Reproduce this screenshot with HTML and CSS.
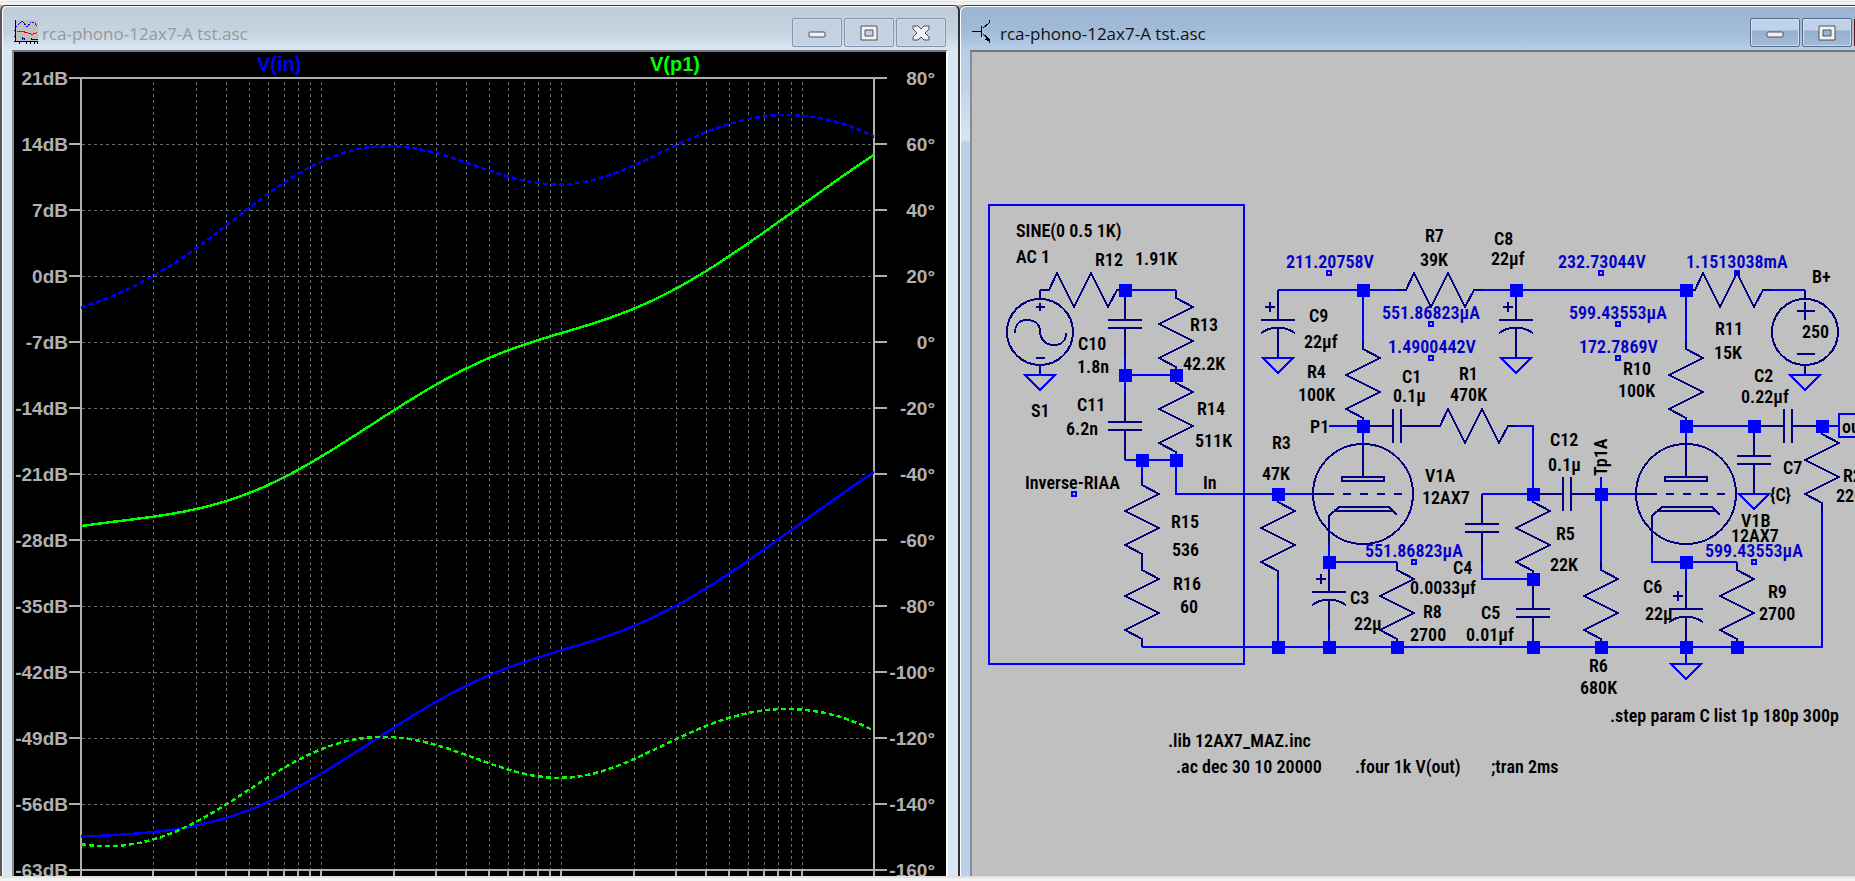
FILE: index.html
```
<!DOCTYPE html>
<html lang="en">
<head>
    <meta charset="UTF-8">
    <meta name="viewport" content="width=device-width, initial-scale=1.0">
    <title>rca-phono-12ax7-A tst.asc</title>
    <link rel="stylesheet" href="styles.css">
</head>
<body>
    <div class="toolbar-edge"></div>
    <main class="desktop">
        <section class="window window-plot">
            <header class="titlebar">
                <svg class="app-icon" viewBox="0 0 24 24" width="24" height="24" aria-hidden="true">
                    <rect x="2" width="22" height="22" fill="#c0c0c0"/>
                    <path d="M1.500 0V22M0 21.500H24M5.500 22v2M12.500 22v2M16.500 22v2M20.500 22v2M23.500 22v2M0 10.500h2M0 16.500h2" stroke="#000"/>
                    <path d="M2 7L8 1L13 7L17 2H20L23 6" fill="none" stroke="#00f" stroke-dasharray="2 1"/>
                    <path d="M3 11.500h5l5 1 5 2 5-2" fill="none" stroke="#f00"/>
                    <path d="M8.500 20v-2l2 1v-1M17.500 18v1.500h6" fill="none" stroke="#00a"/>
                </svg>
                <h1 class="title">rca-phono-12ax7-A tst.asc</h1>
                <div class="controls">
                    <button class="control" type="button" aria-label="Minimize"><svg width="20" height="20"><rect x="2" y="9" width="16" height="5" rx="1"/></svg></button>
                    <button class="control" type="button" aria-label="Maximize"><svg width="20" height="20"><path fill-rule="evenodd" d="M2 3h16v14H2zM6 7v6h8V7z"/></svg></button>
                    <button class="control" type="button" aria-label="Close"><svg width="20" height="20"><path d="M2 3h5l3 3 3-3h5v3l-4 4 4 4v3h-5l-3-3-3 3H2v-3l4-4-4-4z"/></svg></button>
                </div>
            </header>
            <svg class="view plot" role="img" aria-label="AC analysis plot">
                <g id="plot" transform="translate(-14 -52)">
                    <text class="trace-label label-in" x="257" y="71">V(in)</text>
                    <text class="trace-label label-p1" x="650" y="71">V(p1)</text>
                </g>
            </svg>
        </section>

        <section class="window window-schematic">
            <header class="titlebar">
                <svg class="app-icon" viewBox="0 0 24 24" width="24" height="24" aria-hidden="true">
                    <path d="M0 11.500h9M9.500 6v11M11 8l6-5V0M11 14l6 5v4" fill="none" stroke="#000"/>
                    <path d="M17 21l-4-1 3-4z"/>
                </svg>
                <h1 class="title">rca-phono-12ax7-A tst.asc</h1>
                <div class="controls">
                    <button class="control" type="button" aria-label="Minimize"><svg width="20" height="20"><rect x="2" y="9" width="16" height="5" rx="1"/></svg></button>
                    <button class="control" type="button" aria-label="Maximize"><svg width="20" height="20"><path fill-rule="evenodd" d="M2 3h16v14H2zM6 7v6h8V7z"/></svg></button>
                    <button class="control close" type="button" aria-label="Close"><svg width="20" height="20"><path d="M2 3h5l3 3 3-3h5v3l-4 4 4 4v3h-5l-3-3-3 3H2v-3l4-4-4-4z"/></svg></button>
                </div>
            </header>
            <svg class="view schematic" role="img" aria-label="Phono preamp schematic">
                <defs>
                    <!-- origin of each part is its top (or left) pin -->
                    <path id="res" d="M0 0V8L17 17L-17 34L17 51L-17 68L0 77V85"/>
                    <path id="resh" d="M0 0H9L17 -17L34 17L51 -17L68 17L77 0H85"/>
                    <path id="cap" d="M0 0V30M-17 30H17M-17 38H17M0 38V68"/>
                    <path id="caph" d="M0 0H30M30 -17V17M38 -17V17M38 0H68"/>
                    <path id="polcap" d="M0 0V30M-17 30H17M-17 43Q-9 38 -4 38H4Q9 38 17 43M0 38V68M-13 17H-3M-8 12V22"/>
                    <path id="gnd" d="M-15 0H15L0 15Z"/>
                    <g id="tube">
                        <circle r="50"/>
                        <path d="M0 -50V-17M-21 -17H21V-13H-21ZM-51 0H-29M-20 0h8M-3 0h8M14 0h8M31 0h8M-29 17L-24 13H26L30 17M-29 17H30L34 21M-24 13L-34 22V51"/>
                    </g>
                    <rect id="dot" x="-6" y="-6" width="13" height="13"/>
                    <rect id="anchor" x="-2" y="-2" width="4" height="4"/>
                </defs>
                <g transform="translate(-972 -52)">
                    <g class="parts">
                        <use href="#resh" x="1040" y="290"/>
                        <use href="#res" x="1176" y="290"/>
                        <use href="#res" x="1176" y="375"/>
                        <use href="#res" x="1142" y="477"/>
                        <use href="#res" x="1142" y="562"/>
                        <use href="#cap" x="1125" y="290"/>
                        <use href="#cap" x="1125" y="392"/>
                        <use href="#polcap" x="1278" y="290"/>
                        <use href="#polcap" x="1516" y="290"/>
                        <use href="#polcap" x="1329" y="562"/>
                        <use href="#polcap" x="1686" y="579"/>
                        <use href="#resh" x="1397" y="290"/>
                        <use href="#resh" x="1431" y="426"/>
                        <use href="#resh" x="1686" y="290"/>
                        <use href="#res" x="1363" y="341"/>
                        <use href="#res" x="1686" y="341"/>
                        <use href="#res" x="1278" y="494"/>
                        <use href="#res" x="1533" y="494"/>
                        <use href="#res" x="1397" y="562"/>
                        <use href="#res" x="1601" y="562"/>
                        <use href="#res" x="1737" y="562"/>
                        <use href="#res" x="1822" y="426"/>
                        <use href="#cap" x="1482" y="494"/>
                        <use href="#cap" x="1533" y="579"/>
                        <use href="#cap" x="1754" y="426"/>
                        <use href="#caph" x="1363" y="426"/>
                        <use href="#caph" x="1533" y="494"/>
                        <use href="#caph" x="1754" y="426"/>
                        <use href="#tube" x="1363" y="494"/>
                        <use href="#tube" x="1686" y="494"/>
                        <!-- S1 -->
                        <circle cx="1040" cy="332" r="33"/>
                        <path d="M1040 290V299M1040 365V375M1036 307H1045M1040 303V311M1036 358H1045M1015 333C1015 324 1020 320 1027 320C1037 320 1040 326 1040 332C1041 340 1045 345 1054 345C1062 345 1066 340 1066 333"/>
                        <!-- B+ -->
                        <circle cx="1805" cy="332" r="33"/>
                        <path d="M1805 290V299M1805 365V375M1797 311H1815M1805 302V320M1797 354H1815"/>
                    </g>
                    <g class="wires">
                        <rect x="989" y="205" width="255" height="459"/>
                        <path d="M1125 290H1176M1125 358V392M1125 375H1176M1125 460H1176M1142 460V477M1176 460V494H1312M1142 647H1822V511"/>
                        <path d="M1278 290H1397M1363 290V341M1329 426H1363V443M1482 290H1686V341M1771 290H1805M1516 426H1533V494"/>
                        <path d="M1482 494H1533M1482 562V579H1533M1278 579V647M1329 545V562H1397M1329 630V647M1601 477V562M1601 494H1635"/>
                        <path d="M1652 545V562H1737M1686 562V579M1686 426H1754M1686 426V443M1822 426H1838M1880 414H1839V437H1880M1686 647V664"/>
                        <use href="#gnd" x="1040" y="375"/>
                        <use href="#gnd" x="1278" y="358"/>
                        <use href="#gnd" x="1516" y="358"/>
                        <use href="#gnd" x="1805" y="375"/>
                        <use href="#gnd" x="1754" y="494"/>
                        <use href="#gnd" x="1686" y="664"/>
                        <use href="#anchor" x="1074" y="494"/>
                        <use href="#anchor" x="1329" y="273"/>
                        <use href="#anchor" x="1431" y="324"/>
                        <use href="#anchor" x="1431" y="358"/>
                        <use href="#anchor" x="1601" y="273"/>
                        <use href="#anchor" x="1618" y="324"/>
                        <use href="#anchor" x="1618" y="358"/>
                        <use href="#anchor" x="1737" y="273"/>
                        <use href="#anchor" x="1414" y="562"/>
                        <use href="#anchor" x="1754" y="562"/>
                    </g>
                    <g class="dots">
                        <use href="#dot" x="1125" y="290"/>
                        <use href="#dot" x="1125" y="375"/>
                        <use href="#dot" x="1176" y="375"/>
                        <use href="#dot" x="1142" y="460"/>
                        <use href="#dot" x="1176" y="460"/>
                        <use href="#dot" x="1278" y="494"/>
                        <use href="#dot" x="1278" y="647"/>
                        <use href="#dot" x="1329" y="562"/>
                        <use href="#dot" x="1329" y="647"/>
                        <use href="#dot" x="1397" y="647"/>
                        <use href="#dot" x="1363" y="290"/>
                        <use href="#dot" x="1363" y="426"/>
                        <use href="#dot" x="1516" y="290"/>
                        <use href="#dot" x="1533" y="494"/>
                        <use href="#dot" x="1533" y="579"/>
                        <use href="#dot" x="1533" y="647"/>
                        <use href="#dot" x="1601" y="494"/>
                        <use href="#dot" x="1601" y="647"/>
                        <use href="#dot" x="1686" y="290"/>
                        <use href="#dot" x="1686" y="426"/>
                        <use href="#dot" x="1686" y="562"/>
                        <use href="#dot" x="1686" y="647"/>
                        <use href="#dot" x="1737" y="647"/>
                        <use href="#dot" x="1754" y="426"/>
                        <use href="#dot" x="1822" y="426"/>
                    </g>
                    <g class="labels">
                        <text x="1016" y="237">SINE(0 0.5 1K)</text>
                        <text x="1016" y="263">AC 1</text>
                        <text x="1095" y="266">R12</text>
                        <text x="1135" y="265">1.91K</text>
                        <text x="1190" y="331">R13</text>
                        <text x="1183" y="370">42.2K</text>
                        <text x="1078" y="350">C10</text>
                        <text x="1077" y="373">1.8n</text>
                        <text x="1077" y="411">C11</text>
                        <text x="1066" y="435">6.2n</text>
                        <text x="1031" y="417">S1</text>
                        <text x="1197" y="415">R14</text>
                        <text x="1195" y="447">511K</text>
                        <text x="1025" y="489">Inverse-RIAA</text>
                        <text x="1203" y="489">In</text>
                        <text x="1171" y="528">R15</text>
                        <text x="1172" y="556">536</text>
                        <text x="1173" y="590">R16</text>
                        <text x="1180" y="613">60</text>
                        <text x="1425" y="242">R7</text>
                        <text x="1420" y="266">39K</text>
                        <text x="1494" y="245">C8</text>
                        <text x="1491" y="265">22µf</text>
                        <text x="1309" y="322">C9</text>
                        <text x="1304" y="348">22µf</text>
                        <text x="1307" y="378">R4</text>
                        <text x="1298" y="401">100K</text>
                        <text x="1402" y="383">C1</text>
                        <text x="1393" y="402">0.1µ</text>
                        <text x="1459" y="380">R1</text>
                        <text x="1450" y="401">470K</text>
                        <text x="1310" y="433">P1</text>
                        <text x="1272" y="449">R3</text>
                        <text x="1262" y="480">47K</text>
                        <text x="1425" y="482">V1A</text>
                        <text x="1422" y="504">12AX7</text>
                        <text x="1453" y="574">C4</text>
                        <text x="1410" y="594">0.0033µf</text>
                        <text x="1350" y="604">C3</text>
                        <text x="1354" y="630">22µ</text>
                        <text x="1423" y="618">R8</text>
                        <text x="1410" y="641">2700</text>
                        <text x="1481" y="619">C5</text>
                        <text x="1466" y="641">0.01µf</text>
                        <text x="1812" y="283">B+</text>
                        <text x="1802" y="338">250</text>
                        <text x="1623" y="375">R10</text>
                        <text x="1618" y="397">100K</text>
                        <text x="1715" y="335">R11</text>
                        <text x="1714" y="359">15K</text>
                        <text x="1754" y="382">C2</text>
                        <text x="1741" y="403">0.22µf</text>
                        <text x="1842" y="433">out</text>
                        <text x="1550" y="446">C12</text>
                        <text x="1548" y="471">0.1µ</text>
                        <text transform="translate(1607 476) rotate(-90)">Tp1A</text>
                        <text x="1556" y="540">R5</text>
                        <text x="1550" y="571">22K</text>
                        <text x="1589" y="672">R6</text>
                        <text x="1580" y="694">680K</text>
                        <text x="1643" y="593">C6</text>
                        <text x="1645" y="620">22µ</text>
                        <text x="1768" y="598">R9</text>
                        <text x="1759" y="620">2700</text>
                        <text x="1741" y="527">V1B</text>
                        <text x="1731" y="542">12AX7</text>
                        <text x="1783" y="474">C7</text>
                        <text x="1770" y="501">{C}</text>
                        <text x="1843" y="482">R2</text>
                        <text x="1836" y="502">220K</text>
                        <text x="1610" y="722">.step param C list 1p 180p 300p</text>
                        <text x="1168" y="747">.lib 12AX7_MAZ.inc</text>
                        <text x="1176" y="773">.ac dec 30 10 20000</text>
                        <text x="1355" y="773">.four 1k V(out)</text>
                        <text x="1491" y="773">;tran 2ms</text>
                    </g>
                    <g class="labels op-points">
                        <text x="1286" y="268">211.20758V</text>
                        <text x="1382" y="319">551.86823µA</text>
                        <text x="1388" y="353">1.4900442V</text>
                        <text x="1558" y="268">232.73044V</text>
                        <text x="1686" y="268">1.1513038mA</text>
                        <text x="1569" y="319">599.43553µA</text>
                        <text x="1579" y="353">172.7869V</text>
                        <text x="1365" y="557">551.86823µA</text>
                        <text x="1705" y="557">599.43553µA</text>
                    </g>
                </g>
            </svg>
        </section>
    </main>
    <div class="status-edge"></div>
    <script src="plot.js"></script>
</body>
</html>
```
FILE: styles.css
```
* {
    box-sizing: border-box;
}
body {
    display: flex;
    flex-direction: column;
    height: 100vh;
    margin: 0;
    overflow: hidden;
    background: #f0f0f0;
    font-family: "Open Sans", sans-serif;
}
.toolbar-edge {
    flex: 0 0 5px;
    border-top: 1px solid #f8f8f8;
    box-shadow: inset 0 1px #e2e2e2;
}
.status-edge {
    flex: 0 0 5px;
    border-top: 2px solid #e3e3e3;
    background: #f2f2f2;
}
.desktop {
    display: flex;
    flex: 1;
    min-height: 0;
    overflow: hidden;
    background: #b8b09c;
}
.window {
    display: flex;
    flex: 0 0 960px;
    flex-direction: column;
    border-top: 1px solid #3a3a40;
    border-radius: 6px 6px 0 0;
    padding: 1px 10px 0 10px;
    box-shadow: inset 1px 1px #fff;
}
.window-plot {
    border-right: 2px solid #2e2e33;
    border-left: 2px solid #58585e;
    background: linear-gradient(#bfccda 0, #c6d3e0 28px, #d8e5f2 42px);
}
.window-schematic {
    flex-basis: 956px;
    background: linear-gradient(#99b4d1 0, #a3bcd8 28px, #b5cde8 42px, #b9d1ea 70px, #d9e5f3 134px, #b9d1ea 136px);
}
.titlebar {
    display: flex;
    flex: 0 0 43px;
    align-items: flex-start;
    padding: 11px 2px 0 2px;
}
.app-icon {
    margin-top: 2px;
    shape-rendering: crispEdges;
}
.title {
    flex: 1;
    margin: 0 0 0 4px;
    color: #111;
    font-size: 17px;
    font-weight: 400;
    line-height: 32px;
}
.window-plot .title {
    color: #999;
}
.controls {
    display: flex;
    gap: 2px;
}
.control {
    display: flex;
    align-items: center;
    justify-content: center;
    width: 50px;
    height: 29px;
    border: 1px solid #8193ad;
    border-radius: 2px;
    padding: 0;
    background: #c4d1e0;
    box-shadow: inset 0 0 0 1px #d2dce8;
}
.control svg {
    fill: #f2f2f2;
    stroke: #4a5060;
    stroke-width: 1;
}
.window-schematic .control {
    border-color: #566b8c;
    background: linear-gradient(#c0d2e8 42%, #96afcd 43%, #a3bbd8);
    box-shadow: inset 0 0 0 1px #cfdded;
}
.window-schematic .close {
    border-color: #5a1525;
    background: #c8573f;
}
.view {
    flex: 1;
    min-height: 0;
    width: 100%;
    border-top: 2px solid #74767a;
    border-left: 2px solid #8a8c90;
    shape-rendering: crispEdges;
}
.window-plot .view {
    border-right: 2px solid #fff;
}
.plot {
    background: #000;
}
.plot text {
    fill: #b0b0b0;
    font: bold 19px "Liberation Sans", Arial, sans-serif;
}
.plot .trace-label {
    font-size: 20px;
}
.plot .label-in {
    fill: #0000ff;
}
.plot .label-p1 {
    fill: #00ff00;
}
.axis {
    fill: none;
    stroke: #b0b0b0;
    stroke-width: 2;
}
.grid {
    fill: none;
    stroke: #6c6c6c;
    stroke-width: 1;
    stroke-dasharray: 3 3;
}
.trace {
    fill: none;
    stroke-width: 2.5;
}
.trace-in {
    stroke: #0000ff;
}
.trace-p1 {
    stroke: #00ff00;
}
.phase {
    stroke-dasharray: 5 3;
}
.schematic {
    background: #c0c0c0;
}
.parts {
    fill: none;
    stroke: #000080;
    stroke-width: 2;
}
.wires {
    fill: none;
    stroke: #0000ff;
    stroke-width: 2;
}
.dots {
    fill: #0000ff;
}
.labels {
    fill: #000;
    font: 600 18px "Roboto Condensed", "Liberation Sans", sans-serif;
}
.op-points {
    fill: #0000c8;
}
```
FILE: plot.js
```
const plot = document.getElementById('plot');
const left = 81, right = 874, topEdge = 78, bottom = 870;
const decade = (right - left) / Math.log10(2000);

function add(tag, attrs, text) {
    const el = document.createElementNS('http://www.w3.org/2000/svg', tag);
    for (const key in attrs) el.setAttribute(key, attrs[key]);
    if (text) el.textContent = text;
    plot.appendChild(el);
}

let grid = '';
let axis = `M${left} ${bottom + 8}V${topEdge}M${left - 12} ${topEdge}H${right + 13}M${right} ${topEdge}V${bottom + 8}M${left - 12} ${bottom}H${right + 13}`;

// log frequency lines, 10Hz to 20kHz
for (let base = 10; base < 20000; base *= 10) {
    for (let n = 1; n < 10; n++) {
        const f = base * n;
        if (f === 10 || f >= 20000) continue;
        const x = Math.round(left + Math.log10(f / 10) * decade);
        grid += `M${x + 0.5} ${topEdge + 4}V${bottom}`;
        axis += `M${x} ${bottom}v8`;
    }
}

// dB on the left, phase on the right
for (let i = 0; i <= 12; i++) {
    const y = topEdge + i * 66;
    if (i > 0 && i < 12) {
        grid += `M${left + 1} ${y + 0.5}H${right}`;
        axis += `M${left - 12} ${y}H${left}M${right} ${y}h13`;
    }
    add('text', { x: left - 13, y: y + 7, 'text-anchor': 'end' }, `${21 - 7 * i}dB`);
    add('text', { x: 935, y: y + 7, 'text-anchor': 'end' }, `${80 - 20 * i}°`);
}
add('path', { class: 'grid', d: grid });
add('path', { class: 'axis', d: axis });

// inverse RIAA with a small HF pole, [dB, degrees]
function inverseRiaa(f) {
    const w = 2 * Math.PI * f;
    const mag = t => 10 * Math.log10(1 + (w * t) ** 2);
    const arg = t => Math.atan(w * t) * 180 / Math.PI;
    return [
        mag(3180e-6) + mag(75e-6) - mag(318e-6) - mag(3.38e-6),
        arg(3180e-6) + arg(75e-6) - arg(318e-6) - arg(3.38e-6)
    ];
}

// LF rolloff of the first stage
function stage(f) {
    const z = 1.2, p = 4.5;
    return [
        10 * Math.log10((f * f + z * z) / (f * f + p * p)),
        (Math.atan(p / f) - Math.atan(z / f)) * 180 / Math.PI
    ];
}

const ref = inverseRiaa(1000)[0];
const paths = { inDb: [], inPhase: [], p1Db: [], p1Phase: [] };

for (let i = 0; i <= 100; i++) {
    const f = 10 * Math.pow(2000, i / 100);
    const x = left + (right - left) * i / 100;
    const [db, deg] = inverseRiaa(f);
    const [sdb, sdeg] = stage(f);
    const yDb = v => topEdge + (21 - v) * 66 / 7;
    const yDeg = v => topEdge + (80 - v) * 66 / 20;
    paths.inDb.push([x, yDb(db - ref - 39.7)]);
    paths.inPhase.push([x, yDeg(deg)]);
    paths.p1Db.push([x, yDb(db - ref - 6.05 + sdb)]);
    paths.p1Phase.push([x, yDeg(deg + sdeg - 180)]);
}

const line = points => 'M' + points.map(p => p[0].toFixed(1) + ' ' + p[1].toFixed(1)).join('L');
add('path', { class: 'trace trace-in phase', d: line(paths.inPhase) });
add('path', { class: 'trace trace-in', d: line(paths.inDb) });
add('path', { class: 'trace trace-p1 phase', d: line(paths.p1Phase) });
add('path', { class: 'trace trace-p1', d: line(paths.p1Db) });
```
